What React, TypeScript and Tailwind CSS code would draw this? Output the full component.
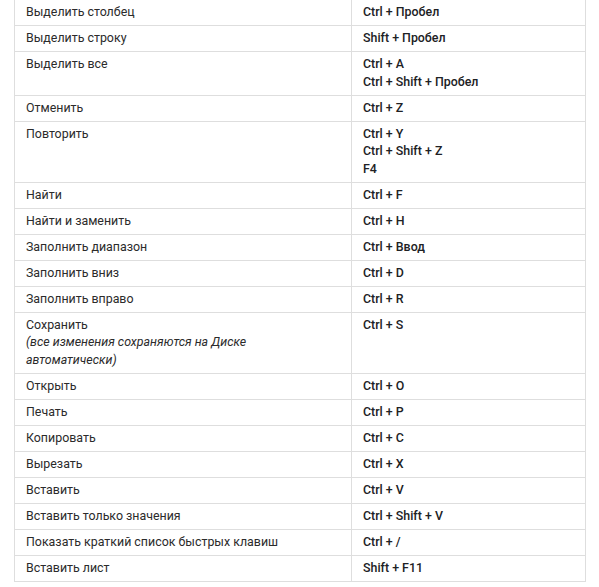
import React from "react";

type Row = { action: React.ReactNode; keys: string[] };

const rows: Row[] = [
  { action: "Выделить столбец", keys: ["Ctrl + Пробел"] },
  { action: "Выделить строку", keys: ["Shift + Пробел"] },
  { action: "Выделить все", keys: ["Ctrl + A", "Ctrl + Shift + Пробел"] },
  { action: "Отменить", keys: ["Ctrl + Z"] },
  { action: "Повторить", keys: ["Ctrl + Y", "Ctrl + Shift + Z", "F4"] },
  { action: "Найти", keys: ["Ctrl + F"] },
  { action: "Найти и заменить", keys: ["Ctrl + H"] },
  { action: "Заполнить диапазон", keys: ["Ctrl + Ввод"] },
  { action: "Заполнить вниз", keys: ["Ctrl + D"] },
  { action: "Заполнить вправо", keys: ["Ctrl + R"] },
  {
    action: (
      <>
        Сохранить
        <br />
        <i>(все изменения сохраняются на Диске автоматически)</i>
      </>
    ),
    keys: ["Ctrl + S"],
  },
  { action: "Открыть", keys: ["Ctrl + O"] },
  { action: "Печать", keys: ["Ctrl + P"] },
  { action: "Копировать", keys: ["Ctrl + C"] },
  { action: "Вырезать", keys: ["Ctrl + X"] },
  { action: "Вставить", keys: ["Ctrl + V"] },
  { action: "Вставить только значения", keys: ["Ctrl + Shift + V"] },
  { action: "Показать краткий список быстрых клавиш", keys: ["Ctrl + /"] },
  { action: "Вставить лист", keys: ["Shift + F11"] },
];

export default function App() {
  return (
    <div className="w-[599px] h-[587px] bg-white overflow-hidden" style={{ fontFamily: "Roboto, 'Noto Sans', sans-serif" }}>
      <div className="ml-[14px] -mt-px w-[572px] border border-[#dedede] text-[12.4px] leading-[17.5px] text-[#2b2b2b]">
        {rows.map((r, i) => (
          <div key={i} className={`flex ${i > 0 ? "border-t border-[#dedede]" : ""}`}>
            <div className="w-[337px] shrink-0 pl-[11px] pr-3 pt-[3px] pb-[4.5px] border-r border-[#dedede]">
              <div className="w-[262px]">{r.action}</div>
            </div>
            <div className="flex-1 pl-[11px] pr-3 pt-[3px] pb-[4.5px] font-medium text-[#202124]">
              {r.keys.map((k, j) => (
                <div key={j}>{k}</div>
              ))}
            </div>
          </div>
        ))}
      </div>
    </div>
  );
}
